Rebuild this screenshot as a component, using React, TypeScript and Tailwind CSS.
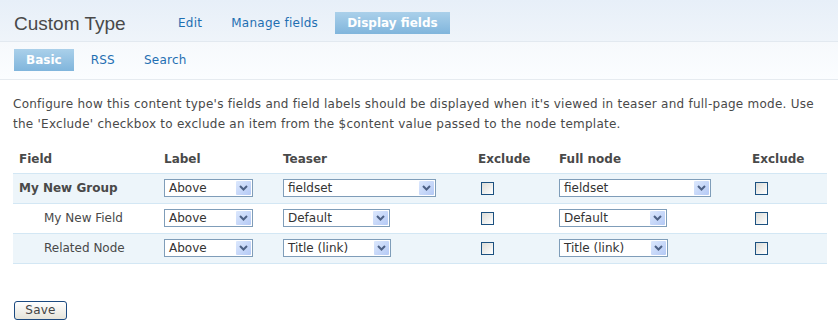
const font = "font-['DejaVu_Sans',sans-serif]";

function FakeSelect({ value, width }: { value: string; width: string }) {
  return (
    <div
      className={`relative flex h-[18px] items-center border border-[#7f9db9] bg-white pl-[4px] text-[12px] text-[#333] ${width}`}
    >
      <span className="leading-none">{value}</span>
      <span className="absolute right-px top-px flex h-[14px] w-[15px] items-center justify-center rounded-[1px] bg-[linear-gradient(135deg,#dce8fd,#b4c9f5)]">
        <svg width="9" height="6" viewBox="0 0 9 6">
          <path d="M1 1 L4.5 4.5 L8 1" fill="none" stroke="#4d6185" strokeWidth="2" />
        </svg>
      </span>
    </div>
  );
}

function Check() {
  return (
    <span className="ml-[3px] block h-[13px] w-[13px] border border-[#1c5180] bg-[linear-gradient(135deg,#dcdcd7,#ffffff)]" />
  );
}

const rows = [
  { name: "My New Group", group: true, teaser: "fieldset", full: "fieldset", tw: "w-[153px]", fw: "w-[152px]" },
  { name: "My New Field", group: false, teaser: "Default", full: "Default", tw: "w-[107px]", fw: "w-[108px]" },
  { name: "Related Node", group: false, teaser: "Title (link)", full: "Title (link)", tw: "w-[108px]", fw: "w-[109px]" },
];

const tab = "h-[22px] px-[12px] leading-[22px] tracking-[0.25px] text-[#1f6fb2]";
const activeTab =
  "h-[22px] bg-[linear-gradient(180deg,#aad0ea,#80b5dc)] px-[12px] leading-[22px] font-bold text-white";

export default function App() {
  return (
    <div className={`h-[332px] w-[838px] bg-white text-[12px] text-[#494949] ${font}`}>
      <div className="bg-[linear-gradient(180deg,#e7eff8,#f6f9fc)]">
        <div className="flex h-[42px] items-start border-b border-[#e2e9f0] pl-[14px] pt-[12px]">
          <h1 className="mt-px w-[152px] font-['Liberation_Sans',sans-serif] text-[19px] leading-[22px] text-[#494949]">
            Custom Type
          </h1>
          <nav className="flex gap-[5px]">
            <a className={tab}>Edit</a>
            <a className={tab}>Manage fields</a>
            <a className={activeTab}>Display fields</a>
          </nav>
        </div>
        <div className="flex h-[38px] items-start gap-[5px] border-b border-[#e6ebf0] bg-[linear-gradient(180deg,#f6f9fc,#fbfdff)] pl-[14px] pt-[7px]">
          <a className={activeTab}>Basic</a>
          <a className={tab}>RSS</a>
          <a className={tab}>Search</a>
        </div>
      </div>

      <div className="px-[13px]">
        <p className="mt-[14px] leading-[20px] tracking-[0.25px]">
          Configure how this content type's fields and field labels should be displayed when it's viewed in teaser
          and full-page mode. Use the 'Exclude' checkbox to exclude an item from the $content value passed to the
          node template.
        </p>

        <table className="mt-[11px] w-[814px] border-collapse">
          <thead>
            <tr className="h-[28px] text-left font-bold">
              <th className="w-[145px] pl-[6px]">Field</th>
              <th className="w-[119px] pl-[6px]">Label</th>
              <th className="w-[195px] pl-[6px]">Teaser</th>
              <th className="w-[81px] pl-[6px]">Exclude</th>
              <th className="w-[193px] pl-[6px]">Full node</th>
              <th className="w-[81px] pl-[6px]">Exclude</th>
            </tr>
          </thead>
          <tbody>
            {rows.map((r, i) => (
              <tr
                key={r.name}
                className={`h-[30px] border-y border-[#d3e7f4] ${i % 2 === 0 ? "bg-[#edf5fa]" : "bg-white"}`}
              >
                <td className={`pl-[6px] ${r.group ? "font-bold" : "pl-[31px]"}`}>{r.name}</td>
                <td className="pl-[6px]">
                  <FakeSelect value="Above" width="w-[89px]" />
                </td>
                <td className="pl-[6px]">
                  <FakeSelect value={r.teaser} width={r.tw} />
                </td>
                <td className="pl-[6px]">
                  <Check />
                </td>
                <td className="pl-[6px]">
                  <FakeSelect value={r.full} width={r.fw} />
                </td>
                <td className="pl-[6px]">
                  <Check />
                </td>
              </tr>
            ))}
          </tbody>
        </table>

        <button className="ml-px mt-[37px] h-[19px] w-[53px] rounded-[3px] border border-[#1c4a80] bg-[linear-gradient(180deg,#ffffff,#e6e4da)] text-[12px] leading-none tracking-[0.25px] text-[#444]">
          Save
        </button>
      </div>
    </div>
  );
}
